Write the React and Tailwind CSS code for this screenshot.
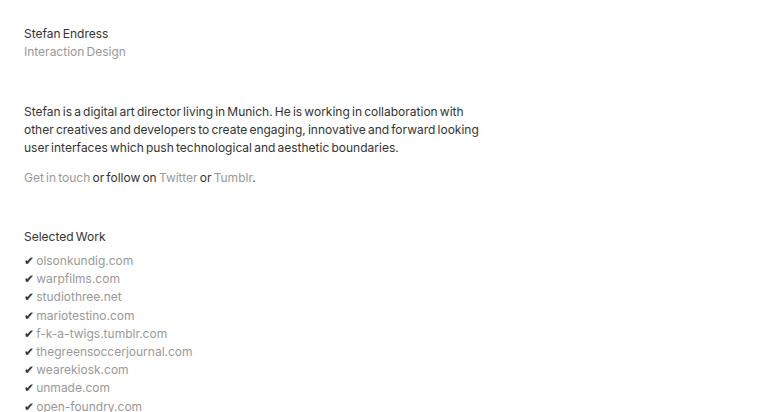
const works = [
  "olsonkundig.com",
  "warpfilms.com",
  "studiothree.net",
  "mariotestino.com",
  "f-k-a-twigs.tumblr.com",
  "thegreensoccerjournal.com",
  "wearekiosk.com",
  "unmade.com",
  "open-foundry.com",
];

export default function App() {
  return (
    <div className="min-h-screen bg-white px-6 pt-[24.6px] font-[Inter,sans-serif] text-[12px] leading-[18.2px] text-[#333] [word-spacing:-1.2px]">
      <div>
        <div>Stefan Endress</div>
        <div className="text-[#999]">Interaction Design</div>
      </div>
      <p className="mt-[41.5px] w-[460px]">
        Stefan is a digital art director living in Munich. He is working in collaboration with other creatives and developers to create engaging, innovative and forward looking user interfaces which push technological and aesthetic boundaries.
      </p>
      <p className="mt-[11.5px]">
        <a className="text-[#999]">Get in touch</a> or follow on{" "}
        <a className="text-[#999]">Twitter</a> or{" "}
        <a className="text-[#999]">Tumblr</a>.
      </p>
      <div className="mt-[41px]">Selected Work</div>
      <ul className="mt-[6px]">
        {works.map((w) => (
          <li key={w}>
            <span className="text-[#333]">✔ </span>
            <span className="text-[#999]">{w}</span>
          </li>
        ))}
      </ul>
    </div>
  );
}
